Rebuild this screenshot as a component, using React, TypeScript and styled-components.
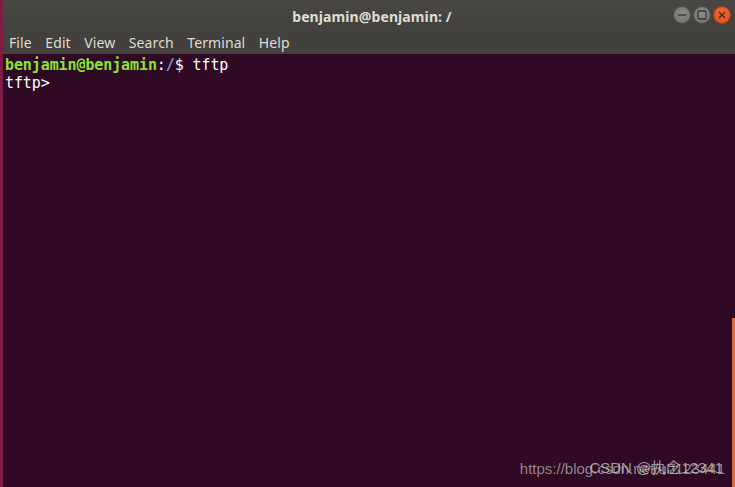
import React from "react";
import styled, { createGlobalStyle } from "styled-components";

const GlobalStyle = createGlobalStyle`
  html, body {
    margin: 0;
    padding: 0;
    background: #300a24;
  }
  * {
    box-sizing: border-box;
  }
`;

const menuItems = ["File", "Edit", "View", "Search", "Terminal", "Help"];

export default function App() {
  return (
    <>
      <GlobalStyle />
      <Window>
        <EdgeStrip />
        <Main>
          <TitleBar>
            <Title>benjamin@benjamin: /</Title>
            <WindowButtons>
              <RoundButton>
                <svg width="10" height="10" viewBox="0 0 10 10">
                  <line x1="1" y1="5" x2="9" y2="5" stroke="#3a3935" strokeWidth="1.4" />
                </svg>
              </RoundButton>
              <RoundButton>
                <svg width="10" height="10" viewBox="0 0 10 10">
                  <rect x="1" y="1" width="8" height="8" fill="none" stroke="#3a3935" strokeWidth="1.3" rx="1" />
                </svg>
              </RoundButton>
              <RoundButton $close>
                <svg width="8" height="8" viewBox="0 0 8 8">
                  <path d="M1 1 L7 7 M7 1 L1 7" stroke="#3a2a20" strokeWidth="1.3" />
                </svg>
              </RoundButton>
            </WindowButtons>
          </TitleBar>
          <MenuBar>
            {menuItems.map((m) => (
              <MenuItem key={m}>{m}</MenuItem>
            ))}
          </MenuBar>
          <Terminal>
            <Screen>
              <Line>
                <Green>benjamin@benjamin</Green>
                <span>:</span>
                <Blue>/</Blue>
                <span>$ tftp</span>
              </Line>
              <Line>tftp&gt;</Line>
            </Screen>
            <ScrollTrack>
              <ScrollThumb />
            </ScrollTrack>
            <Watermark>https://blog.csdn.net/u0123441</Watermark>
            <Watermark $shift>CSDN @执念12341</Watermark>
          </Terminal>
        </Main>
      </Window>
    </>
  );
}

const Window = styled.div`
  width: 735px;
  height: 487px;
  display: flex;
  overflow: hidden;
`;

const EdgeStrip = styled.div`
  width: 3px;
  background: #7e1c44;
  flex-shrink: 0;
`;

const Main = styled.div`
  flex: 1;
  display: flex;
  flex-direction: column;
  min-width: 0;
`;

const TitleBar = styled.div`
  height: 32px;
  background: linear-gradient(#484742, #42413d);
  position: relative;
  display: flex;
  align-items: center;
  justify-content: center;
  padding-left: 6px;
`;

const Title = styled.div`
  font-family: "Noto Sans", "Open Sans", sans-serif;
  font-weight: 700;
  font-size: 14px;
  color: #dfdbd2;
  letter-spacing: 0.1px;
`;

const WindowButtons = styled.div`
  position: absolute;
  right: 4px;
  top: 6px;
  display: flex;
  gap: 2px;
`;

const RoundButton = styled.div<{ $close?: boolean }>`
  width: 18px;
  height: 18px;
  border-radius: 50%;
  display: flex;
  align-items: center;
  justify-content: center;
  background: ${(p) =>
    p.$close
      ? "radial-gradient(circle at 50% 40%, #f26a3a, #df4a16)"
      : "radial-gradient(circle at 50% 40%, #8e8c86, #6f6d68)"};
  border: 1px solid ${(p) => (p.$close ? "#b23c12" : "#4e4d49")};
`;

const MenuBar = styled.div`
  height: 22px;
  background: #42413d;
  display: flex;
  align-items: flex-end;
  padding: 0 0 2px 6px;
`;

const MenuItem = styled.div`
  font-family: "Noto Sans", "Open Sans", sans-serif;
  font-size: 14px;
  color: #dfdbd2;
  margin-right: 13.5px;
  line-height: 18px;
  letter-spacing: 0.1px;
`;

const Terminal = styled.div`
  flex: 1;
  background: #300a24;
  display: flex;
  position: relative;
`;

const Screen = styled.div`
  flex: 1;
  padding: 2px 0 0 2px;
  font-family: "DejaVu Sans Mono", "Liberation Mono", monospace;
  font-size: 15px;
  line-height: 18px;
  color: #ffffff;
`;

const Line = styled.div`
  white-space: pre;
  letter-spacing: -0.1px;
`;

const Green = styled.span`
  color: #8ae234;
  font-weight: 700;
`;

const Blue = styled.span`
  color: #729fcf;
  font-weight: 700;
`;

const ScrollTrack = styled.div`
  width: 3px;
  display: flex;
  flex-direction: column;
  justify-content: flex-end;
`;

const ScrollThumb = styled.div`
  height: 169px;
  background: #d9683a;
`;

const Watermark = styled.div<{ $shift?: boolean }>`
  position: absolute;
  bottom: 10px;
  right: ${(p) => (p.$shift ? "12px" : "10px")};
  font-family: "Liberation Sans", "Noto Sans CJK SC", sans-serif;
  font-size: 15px;
  color: ${(p) => (p.$shift ? "rgba(200,200,200,0.75)" : "rgba(190,190,190,0.7)")};
  white-space: nowrap;
`;
